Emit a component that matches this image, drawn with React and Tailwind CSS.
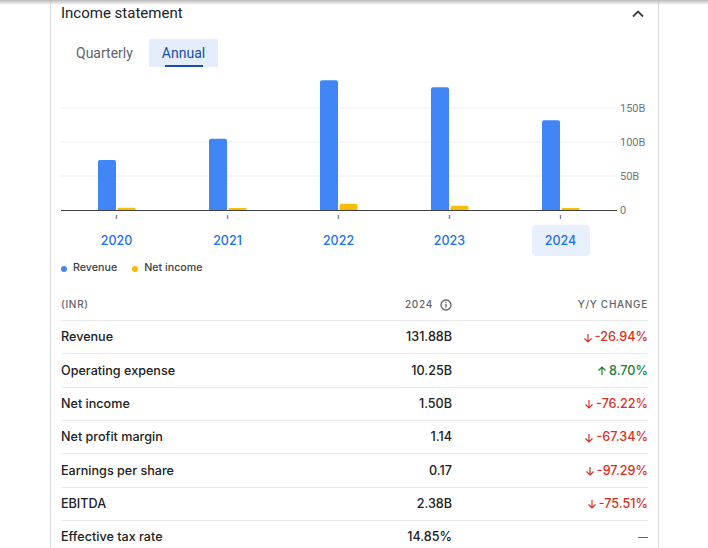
import React from 'react';

const years = ['2020', '2021', '2022', '2023', '2024'];
const revenue = [50, 71.3, 129.7, 122.7, 89.7];
const netIncome = [2.3, 2, 6.3, 4.3, 2];

const rows = [
  ['Revenue', '131.88B', 'down', '-26.94%'],
  ['Operating expense', '10.25B', 'up', '8.70%'],
  ['Net income', '1.50B', 'down', '-76.22%'],
  ['Net profit margin', '1.14', 'down', '-67.34%'],
  ['Earnings per share', '0.17', 'down', '-97.29%'],
  ['EBITDA', '2.38B', 'down', '-75.51%'],
  ['Effective tax rate', '14.85%', 'none', ''],
];

const inter = { fontFamily: 'Inter, Roboto, sans-serif' };

// bar with rounded top corners
const bar = (x, w, h, base) => {
  const r = Math.min(2, h / 2, w / 2);
  const top = base - h;
  return `M${x},${base} L${x},${top + r} Q${x},${top} ${x + r},${top} L${x + w - r},${top} Q${x + w},${top} ${x + w},${top + r} L${x + w},${base} Z`;
};

function Chart() {
  const base = 143;
  return (
    <svg width="586" height="155" className="block" style={{ fontFamily: 'Roboto, sans-serif' }}>
      {[41, 75, 109].map(y => (
        <line key={y} x1="0" x2="556" y1={y} y2={y} stroke="#eef0f2" strokeWidth="1" />
      ))}
      {revenue.map((h, i) => {
        const c = 55.5 + 111 * i;
        return (
          <g key={i}>
            <path d={bar(c - 18.5, 18, h, base)} fill="#4285f4" />
            <path d={bar(c + 1, 18, netIncome[i], base)} fill="#fbbc04" />
            <rect x={c - 0.7} y="148" width="1.4" height="4" fill="#80868b" />
          </g>
        );
      })}
      <line x1="0" x2="556" y1="143.5" y2="143.5" stroke="#3c4043" strokeWidth="1.2" />
      {[['150B', 41], ['100B', 75], ['50B', 109], ['0', 143]].map(([t, y]) => (
        <text key={t} x="559" y={y} dominantBaseline="central" fontSize="11" fill="#70757a">{t}</text>
      ))}
    </svg>
  );
}

const Arrow = ({ dir }) => (
  <svg width="10" height="10" viewBox="0 0 10 10" className="mr-[2px]">
    {dir === 'down' ? (
      <path d="M5 1 V9 M1.5 5.5 L5 9 L8.5 5.5" fill="none" stroke="#d93025" strokeWidth="1.2" />
    ) : (
      <path d="M5 9 V1 M1.5 4.5 L5 1 L8.5 4.5" fill="none" stroke="#188038" strokeWidth="1.2" />
    )}
  </svg>
);

export default function App() {
  return (
    <div className="relative w-[708px] h-[548px] overflow-hidden bg-white" style={{ fontFamily: 'Roboto, Arial, sans-serif' }}>
      <div className="absolute top-0 left-0 right-0 h-[5px] bg-gradient-to-b from-[#b9b9b9] to-transparent z-10" />
      <div className="ml-[50px] w-[609px] h-full border-x border-[#dadce0] px-[10px]">
        <div className="h-[26px] flex items-center justify-between">
          <span className="text-[15px] text-[#202124]">Income statement</span>
          <svg width="12" height="8" viewBox="0 0 12 8" className="mr-[4px] mt-[1px]">
            <path d="M1 6.5 L6 1.5 L11 6.5" fill="none" stroke="#3c4043" strokeWidth="1.8" />
          </svg>
        </div>

        <div className="mt-[13px] flex h-[28px] pl-[1px]">
          <div className="px-[14px] flex items-center text-[14px] text-[#5f6368]">Quarterly</div>
          <div className="relative ml-[2px] px-[13px] flex items-center text-[14px] text-[#174ea6] bg-[#e3edfb]">
            Annual
            <div className="absolute bottom-0 left-1/2 -translate-x-1/2 w-[38px] h-[2px] bg-[#174ea6]" />
          </div>
        </div>

        <Chart />

        <div className="mt-[3px] flex h-[31px]" style={inter}>
          {years.map((y, i) => (
            <div key={y} className="w-[111px] flex justify-center">
              <div className={`w-[58px] h-[31px] pt-[2px] rounded-[4px] flex items-center justify-center text-[12.5px] font-medium text-[#1a73e8] ${i === 4 ? 'bg-[#e8f0fe]' : ''}`}>
                {y}
              </div>
            </div>
          ))}
        </div>

        <div className="mt-[5px] h-[14px] flex items-center text-[10.7px] font-medium text-[#3c4043]" style={inter}>
          <span className="w-[6px] h-[6px] rounded-full bg-[#4285f4] mt-[2px]" />
          <span className="ml-[6px]">Revenue</span>
          <span className="ml-[15px] w-[6px] h-[6px] rounded-full bg-[#fbbc04] mt-[2px]" />
          <span className="ml-[6px]">Net income</span>
        </div>

        <div className="mt-[13px] h-[33px] grid grid-cols-[1fr_150px_196px] items-center border-b border-[#e8eaed] text-[10px] font-medium tracking-[0.7px] text-[#5f6368]" style={inter}>
          <span className="pt-[1px]">(INR)</span>
          <span className="flex items-center justify-end pt-[1px]">
            2024
            <svg width="12" height="12" viewBox="0 0 12 12" className="ml-[7px]">
              <circle cx="6" cy="6" r="5" fill="none" stroke="#5f6368" strokeWidth="1.3" />
              <rect x="5.35" y="5" width="1.3" height="3.6" fill="#5f6368" />
              <rect x="5.35" y="2.9" width="1.3" height="1.3" fill="#5f6368" />
            </svg>
          </span>
          <span className="text-right pt-[1px]">Y/Y CHANGE</span>
        </div>

        {rows.map(([label, val, dir, chg]) => (
          <div key={label} className="h-[33.33px] pt-[1px] grid grid-cols-[1fr_150px_196px] items-center border-b border-[#e8eaed] text-[12.6px] font-medium text-[#202124]" style={inter}>
            <span>{label}</span>
            <span className="text-right">{val}</span>
            <span className="flex items-center justify-end">
              {dir === 'none' ? (
                <span className="w-[10px] h-[1.5px] bg-[#5f6368]" />
              ) : (
                <>
                  <Arrow dir={dir} />
                  <span className={dir === 'down' ? 'text-[#d93025]' : 'text-[#188038]'}>{chg}</span>
                </>
              )}
            </span>
          </div>
        ))}
      </div>
    </div>
  );
}
